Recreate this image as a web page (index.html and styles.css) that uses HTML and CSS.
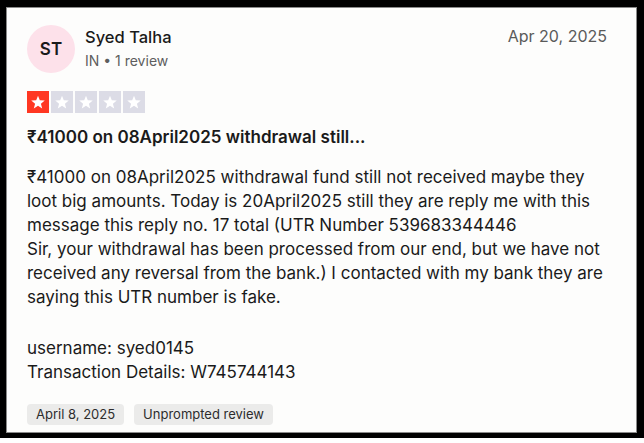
FILE: index.html
```html
<!DOCTYPE html>
<html lang="en">
<head>
<meta charset="utf-8">
<title>Review</title>
<link rel="stylesheet" href="styles.css">
</head>
<body>
<div class="frame">
  <article class="card">
    <header class="head">
      <div class="consumer">
        <div class="avatar">ST</div>
        <div class="who">
          <div class="name">Syed Talha</div>
          <div class="meta">IN • 1 review</div>
        </div>
      </div>
      <time class="date">Apr 20, 2025</time>
    </header>
    <div class="stars">
      <span class="star red"><svg viewBox="0 0 24 24"><path d="M12 3.5l2.4 6.1 6.6.4-5.1 4.2 1.7 6.4L12 17l-5.6 3.6 1.7-6.4L3 10l6.6-.4z" fill="#fff"/></svg></span>
      <span class="star"><svg viewBox="0 0 24 24"><path d="M12 3.5l2.4 6.1 6.6.4-5.1 4.2 1.7 6.4L12 17l-5.6 3.6 1.7-6.4L3 10l6.6-.4z" fill="#fff"/></svg></span>
      <span class="star"><svg viewBox="0 0 24 24"><path d="M12 3.5l2.4 6.1 6.6.4-5.1 4.2 1.7 6.4L12 17l-5.6 3.6 1.7-6.4L3 10l6.6-.4z" fill="#fff"/></svg></span>
      <span class="star"><svg viewBox="0 0 24 24"><path d="M12 3.5l2.4 6.1 6.6.4-5.1 4.2 1.7 6.4L12 17l-5.6 3.6 1.7-6.4L3 10l6.6-.4z" fill="#fff"/></svg></span>
      <span class="star"><svg viewBox="0 0 24 24"><path d="M12 3.5l2.4 6.1 6.6.4-5.1 4.2 1.7 6.4L12 17l-5.6 3.6 1.7-6.4L3 10l6.6-.4z" fill="#fff"/></svg></span>
    </div>
    <h2 class="title">₹41000 on 08April2025 withdrawal still...</h2>
    <p class="body">₹41000 on 08April2025 withdrawal fund still not received maybe they<br>loot big amounts. Today is 20April2025 still they are reply me with this<br>message this reply no. 17 total (UTR Number 539683344446<br>Sir, your withdrawal has been processed from our end, but we have not<br>received any reversal from the bank.) I contacted with my bank they are<br>saying this UTR number is fake.<br><br><span class="extra">username: syed0145<br>Transaction Details: W745744143</span></p>
    <div class="tags">
      <span class="tag">April 8, 2025</span>
      <span class="tag">Unprompted review</span>
    </div>
  </article>
</div>
</body>
</html>
```
FILE: styles.css
```css
html, body {
  margin: 0;
  padding: 0;
  background: #fff;
}
body {
  font-family: Inter, "Noto Sans", sans-serif;
  color: #1a1a1a;
  width: 644px;
  height: 443px;
}
.frame {
  width: 644px;
  height: 438px;
  box-sizing: border-box;
  border-style: solid;
  border-color: #000;
  border-width: 7px 7px 5px 6px;
}
.card {
  height: 100%;
  box-sizing: border-box;
  border: 1px solid #8a8a8a;
  background: #fdfdfc;
  padding: 17px 29px 0 20px;
}
.head {
  display: flex;
  justify-content: space-between;
  align-items: flex-start;
}
.consumer {
  display: flex;
  align-items: center;
  gap: 10px;
}
.avatar {
  width: 48px;
  height: 48px;
  border-radius: 50%;
  background: #fde1ea;
  display: flex;
  align-items: center;
  justify-content: center;
  font-size: 17px;
  font-weight: 600;
  color: #1a1a1a;
}
.who {
  display: flex;
  flex-direction: column;
  gap: 5px;
  margin-top: -2px;
}
.name {
  font-size: 16.5px;
  font-weight: 500;
  color: #1a1a1a;
}
.meta {
  font-size: 14px;
  color: #5e5e5e;
}
.date {
  font-size: 16px;
  color: #5a5a5a;
  margin-top: 1px;
}
.stars {
  display: flex;
  gap: 2px;
  margin-top: 18px;
}
.star {
  width: 22px;
  height: 22px;
  background: #dcdce6;
  display: flex;
  align-items: center;
  justify-content: center;
}
.star svg {
  width: 18px;
  height: 18px;
}
.star.red {
  background: #ff3722;
}
.title {
  margin: 12px 0 0;
  font-size: 17px;
  font-weight: 600;
  line-height: 24px;
  color: #1a1a1a;
}
.body {
  margin: 16px 0 0;
  font-size: 17px;
  line-height: 24px;
  color: #1a1a1a;
  white-space: nowrap;
}
.extra {
  display: inline-block;
  margin-top: 3px;
}
.tags {
  display: flex;
  gap: 10px;
  margin-top: 20px;
}
.tag {
  background: #ebebea;
  border-radius: 4px;
  font-size: 13px;
  line-height: 21px;
  padding: 0 9px;
  color: #2d2d2d;
}
```
